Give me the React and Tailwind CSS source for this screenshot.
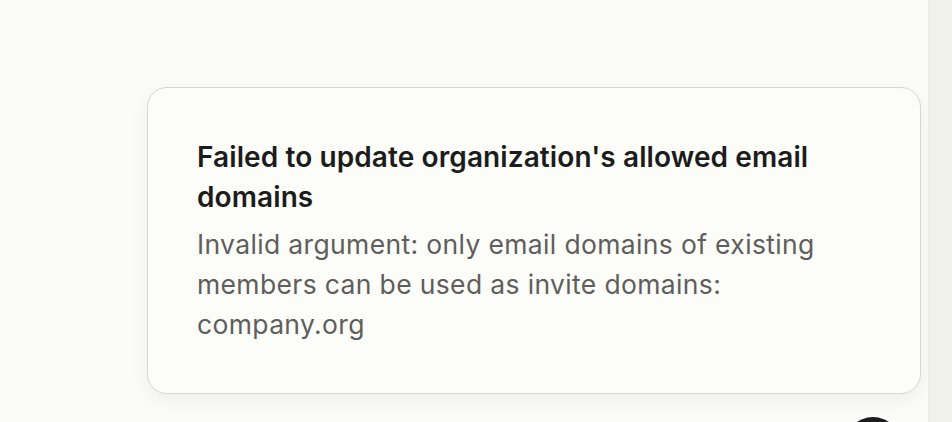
export default function App() {
  return (
    <div
      className="relative flex h-[422px] w-[952px] overflow-hidden bg-[#fbfbf8]"
      style={{ fontFamily: "Inter, 'Liberation Sans', sans-serif" }}
    >
      <main className="flex-1 pl-[147px] pr-[7px] pt-[87px]">
        <div className="rounded-[20px] border border-[#d6d6d2] bg-[#fcfcf9] px-[49px] pb-[49px] pt-[49px] shadow-[0_6px_18px_rgba(0,0,0,0.06)]">
          <h2 className="text-[28px] font-semibold leading-[40px] tracking-[0.1px] text-[#1c1c1c]">
            Failed to update organization's allowed email domains
          </h2>
          <p className="mt-[7px] text-[26.5px] leading-[40px] tracking-[0.35px] text-[#5e5e5c]">
            Invalid argument: only email domains of existing members can be used as invite domains:
            company.org
          </p>
        </div>
      </main>
      <aside className="w-[24px] border-l border-[#ebebe6] bg-[#f1f1ec]" />
      <button className="absolute left-[845px] top-[417px] h-[56px] w-[56px] rounded-full bg-[#1c1c1c]" />
    </div>
  );
}
